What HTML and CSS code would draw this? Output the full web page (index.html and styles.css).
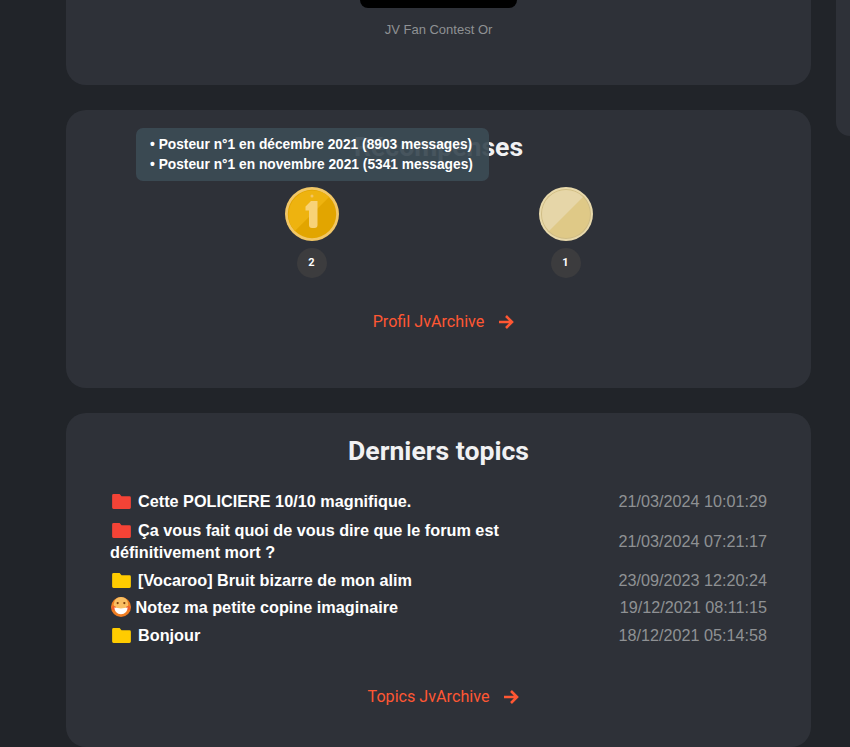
FILE: index.html
```html
<!DOCTYPE html>
<html lang="fr">
<head>
  <meta charset="UTF-8" />
  <title>Profil | JvArchive</title>
  <link rel="stylesheet" href="styles.css">
</head>
<body>
  <div class="layout">
    <main class="content">
      <section class="card card-contest">
        <div class="contest-banner"></div>
        <p class="contest-caption">JV Fan Contest Or</p>
      </section>

      <section class="card card-awards">
        <h2 class="card-title">Récompenses</h2>
        <div class="tooltip">
          <div>• Posteur n°1 en décembre 2021 (8903 messages)</div>
          <div>• Posteur n°1 en novembre 2021 (5341 messages)</div>
        </div>
        <div class="medals">
          <div class="medal">
            <svg class="medal-icon" viewBox="0 0 54 54">
              <circle cx="27" cy="27" r="27" fill="#f2c766"/>
              <circle cx="27" cy="27" r="24.2" fill="#e2a500"/>
              <path d="M9.9 44.1 A24.2 24.2 0 0 1 44.1 9.9 Z" fill="#eeb30f"/>
              <circle cx="27" cy="9" r="1.5" fill="#f3c565"/>
              <path d="M20.5 19.5 L26 14 L32.5 14 L32.5 38 Q32.5 41 29.5 41 L27 41 Q24 41 24 38 L24 23.5 L20.5 23.5 Z" fill="#f8d277"/>
            </svg>
            <span class="medal-count">2</span>
          </div>
          <div class="medal">
            <svg class="medal-icon" viewBox="0 0 54 54">
              <circle cx="27" cy="27" r="27" fill="#e8d9ab"/>
              <circle cx="27" cy="27" r="25" fill="#cfbc85"/>
              <circle cx="27" cy="27" r="24" fill="#dfc987"/>
              <path d="M10 44 A24 24 0 0 1 44 10 Z" fill="#e6d6a8"/>
            </svg>
            <span class="medal-count">1</span>
          </div>
        </div>
        <a class="card-link" href="#">Profil JvArchive
          <svg class="arrow" viewBox="0 0 16 16"><path d="M1 8 H14 M8 2 L14 8 L8 14" fill="none" stroke="currentColor" stroke-width="2.6"/></svg>
        </a>
      </section>

      <section class="card card-topics">
        <h2 class="card-title">Derniers topics</h2>
        <ul class="topics">
          <li class="topic">
            <div class="topic-title">
              <svg class="folder folder-red" viewBox="0 0 20 16"><path d="M0 1.5 Q0 0 1.5 0 L8 0 L10 2.5 L18.5 2.5 Q20 2.5 20 4 L20 14.5 Q20 16 18.5 16 L1.5 16 Q0 16 0 14.5 Z"/></svg>
              Cette POLICIERE 10/10 magnifique.
            </div>
            <div class="topic-date">21/03/2024 10:01:29</div>
          </li>
          <li class="topic">
            <div class="topic-title">
              <svg class="folder folder-red" viewBox="0 0 20 16"><path d="M0 1.5 Q0 0 1.5 0 L8 0 L10 2.5 L18.5 2.5 Q20 2.5 20 4 L20 14.5 Q20 16 18.5 16 L1.5 16 Q0 16 0 14.5 Z"/></svg>
              Ça vous fait quoi de vous dire que le forum est définitivement mort ?
            </div>
            <div class="topic-date">21/03/2024 07:21:17</div>
          </li>
          <li class="topic">
            <div class="topic-title">
              <svg class="folder folder-yellow" viewBox="0 0 20 16"><path d="M0 1.5 Q0 0 1.5 0 L8 0 L10 2.5 L18.5 2.5 Q20 2.5 20 4 L20 14.5 Q20 16 18.5 16 L1.5 16 Q0 16 0 14.5 Z"/></svg>
              [Vocaroo] Bruit bizarre de mon alim
            </div>
            <div class="topic-date">23/09/2023 12:20:24</div>
          </li>
          <li class="topic">
            <div class="topic-title">
              <svg class="smiley" viewBox="0 0 18 18">
                <circle cx="9" cy="9" r="9" fill="#ef7d22"/>
                <circle cx="9" cy="6.5" r="6.5" fill="#f9bf62"/>
                <circle cx="2.6" cy="10" r="2" fill="#ee5f2a"/>
                <circle cx="15.4" cy="10" r="2" fill="#ee5f2a"/>
                <path d="M3 9.5 Q9 11 15 9.5 Q14.6 15.5 9 15.5 Q3.4 15.5 3 9.5 Z" fill="#fff"/>
                <circle cx="6" cy="5.5" r="1" fill="#7a3b0c"/>
                <circle cx="12" cy="5.5" r="1" fill="#7a3b0c"/>
              </svg>
              Notez ma petite copine imaginaire
            </div>
            <div class="topic-date">19/12/2021 08:11:15</div>
          </li>
          <li class="topic">
            <div class="topic-title">
              <svg class="folder folder-yellow" viewBox="0 0 20 16"><path d="M0 1.5 Q0 0 1.5 0 L8 0 L10 2.5 L18.5 2.5 Q20 2.5 20 4 L20 14.5 Q20 16 18.5 16 L1.5 16 Q0 16 0 14.5 Z"/></svg>
              Bonjour
            </div>
            <div class="topic-date">18/12/2021 05:14:58</div>
          </li>
        </ul>
        <a class="card-link" href="#">Topics JvArchive
          <svg class="arrow" viewBox="0 0 16 16"><path d="M1 8 H14 M8 2 L14 8 L8 14" fill="none" stroke="currentColor" stroke-width="2.6"/></svg>
        </a>
      </section>
    </main>
    <aside class="sidebar"></aside>
  </div>
</body>
</html>
```

FILE: styles.css
```css
body {
  margin: 0;
  height: 747px;
  overflow: hidden;
  background: #212429;
  color: #fff;
  font-family: "Liberation Sans", Arial, sans-serif;
}

.layout {
  display: flex;
  align-items: flex-start;
  gap: 25px;
  padding-left: 66px;
}

.content {
  flex: 0 0 745px;
  display: flex;
  flex-direction: column;
  gap: 25px;
}

.sidebar {
  flex: 1 0 0;
  height: 136px;
  background: #2e3138;
  border-radius: 0 0 0 20px;
}

.card {
  background: #2e3138;
  border-radius: 20px;
  text-align: center;
}

.card-contest {
  height: 85px;
  border-radius: 0 0 20px 20px;
}

.contest-banner {
  width: 157px;
  height: 8px;
  margin: 0 auto;
  background: #000;
  border-radius: 0 0 8px 8px;
}

.contest-caption {
  margin: 14px 0 0;
  font-size: 13px;
  line-height: 16px;
  color: #8f9194;
}

.card-awards {
  position: relative;
  height: 278px;
}

.card-topics {
  height: 334px;
}

.card-title {
  margin: 0;
  padding-top: 22px;
  font-family: Roboto, sans-serif;
  font-size: 26.6px;
  line-height: 32px;
  font-weight: 700;
  color: #f1f1f3;
}

.card-awards .card-title {
  padding-top: 21px;
}

.tooltip {
  position: absolute;
  left: 70px;
  top: 18px;
  width: 353px;
  height: 53px;
  box-sizing: border-box;
  padding: 7px 15px 0 14px;
  background: rgba(60, 74, 84, 0.94);
  border-radius: 7px;
  font-size: 13.75px;
  line-height: 20px;
  font-weight: 700;
  text-align: left;
  white-space: nowrap;
}

.medals {
  display: flex;
  justify-content: center;
  margin-top: 24px;
}

.medal {
  width: 254px;
  display: flex;
  flex-direction: column;
  align-items: center;
  gap: 7px;
}

.medal-icon {
  width: 54px;
  height: 54px;
}

.medal-count {
  width: 30px;
  height: 30px;
  border-radius: 50%;
  background: #3c3c3e;
  font-family: Roboto, sans-serif;
  font-size: 11px;
  font-weight: 700;
  line-height: 30px;
}

.card-link {
  display: flex;
  justify-content: center;
  align-items: center;
  gap: 14px;
  margin-top: 34px;
  padding-left: 10px;
  font-family: Roboto, sans-serif;
  font-size: 16.15px;
  line-height: 20px;
  color: #ff5733;
  text-decoration: none;
}

.arrow {
  width: 16px;
  height: 16px;
}

.topics {
  list-style: none;
  margin: 20px 0 0;
  padding: 0 44px;
}

.topic {
  display: flex;
  justify-content: space-between;
  align-items: center;
  padding: 3px 0;
}

/* the wrapped row sits a pixel lower, the next one takes it back */
.topic:nth-child(2) {
  margin-top: 1px;
}

.topic:nth-child(3) {
  margin-bottom: -1px;
}

.topic-title {
  width: 70%;
  font-size: 16.24px;
  line-height: 22px;
  font-weight: 700;
  text-align: left;
}

.topic-date {
  font-size: 16.2px;
  line-height: 22px;
  color: #8f9194;
  white-space: nowrap;
}

.folder {
  width: 19px;
  height: 15px;
  margin: 0 2.5px 0 2px;
  vertical-align: -2px;
}

.folder-red {
  fill: #f44336;
}

.folder-yellow {
  fill: #ffcc00;
}

.smiley {
  width: 20px;
  height: 20px;
  margin-left: 1px;
  vertical-align: -4px;
}

.card-topics .card-link {
  margin-top: 38px;
}
```
